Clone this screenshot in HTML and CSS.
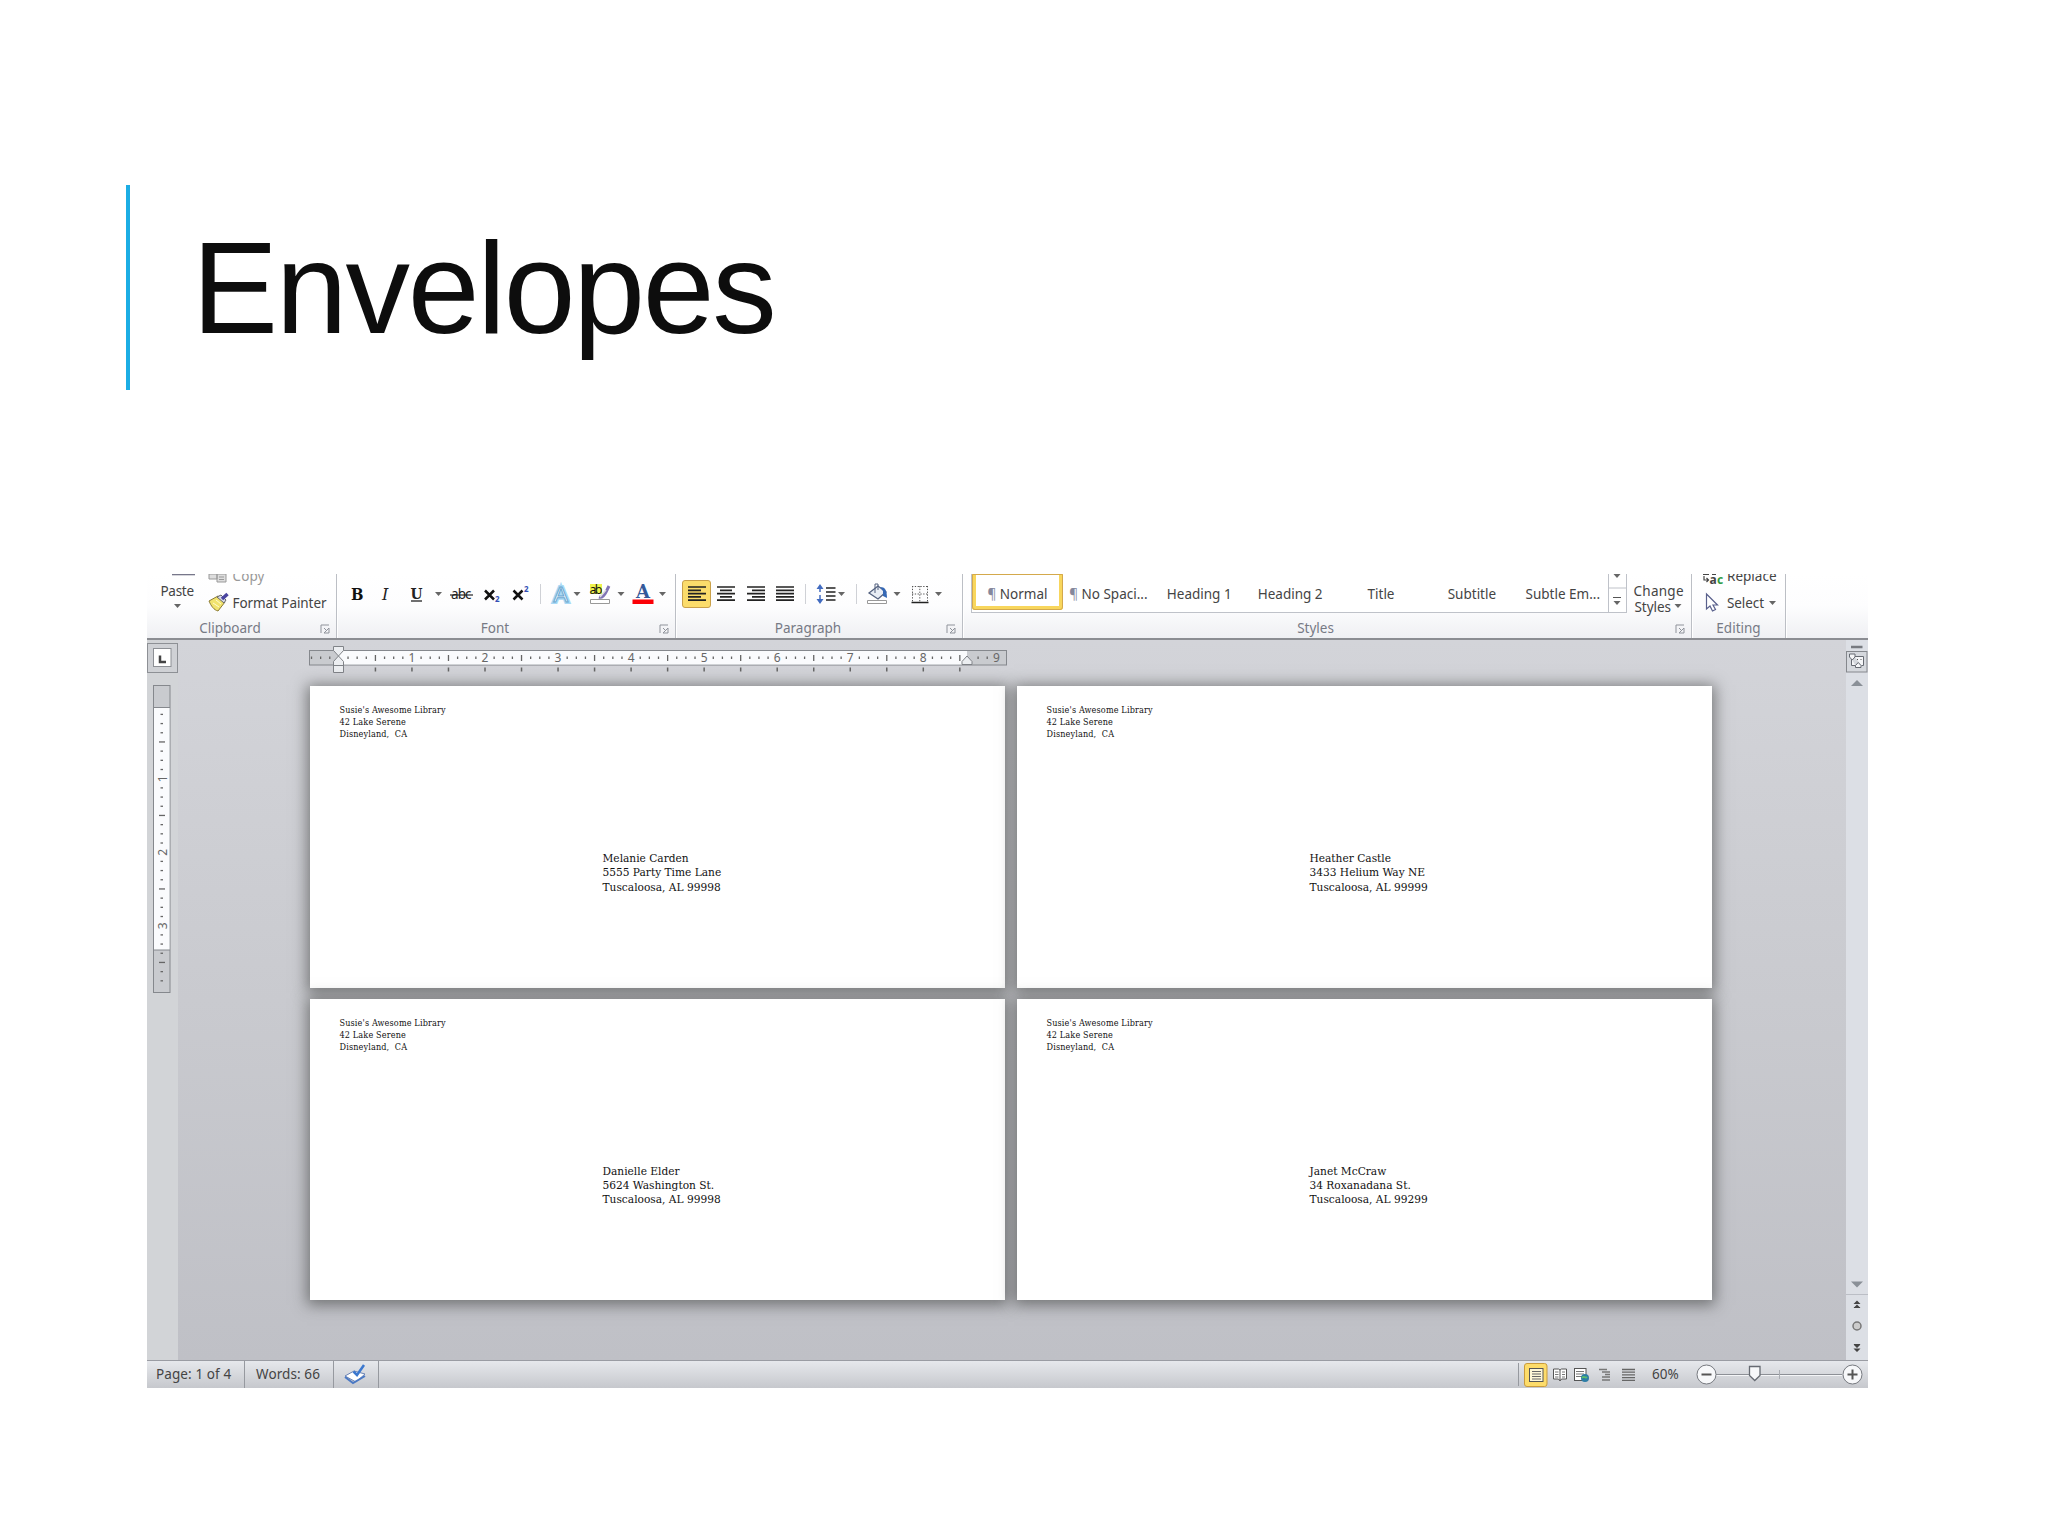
FILE: index.html
```html
<!DOCTYPE html>
<html lang="en">
<head>
  <meta charset="UTF-8" />
  <title>Envelopes</title>
  <link rel="stylesheet" href="styles.css">
</head>
<body>
  <header class="slide-title">
    <h1>Envelopes</h1>
  </header>

  <main class="word">
    <div class="ribbon">
      <section class="group clipboard">
        <div class="tools">
          <svg width="189" height="46" viewBox="147 574 189 46">
            <path d="M172 574.5h23" stroke="#77778a" stroke-width="1.6"/>
            <text x="160.500" y="595.500" textLength="33.500">Paste</text>
            <path class="arrow" d="M174 604h7l-3.500 4z"/>
            <path d="M209 574h8v5h-8zM217 574h9v8h-9z" fill="#ddd" stroke="#999"/>
            <path d="M219 577h5M219 579.500h5" stroke="#999"/>
            <text x="232.500" y="580.500" textLength="32" fill="#999">Copy</text>
            <path d="M209 601l9-5 7 6-7 9c-4-1-7-5-9-10z" fill="#f1e36e" stroke="#8b7b35"/>
            <path d="M213 603l6 4M216 600l5 4" stroke="#fffbd0"/>
            <path d="M217 597l4-2 5 5-2 3z" fill="#d9dbe8" stroke="#666"/>
            <path d="M222 599l5.500-5" stroke="#4a45a0" stroke-width="3.500"/>
            <text x="232.500" y="608" textLength="94">Format Painter</text>
          </svg>
        </div>
        <div class="caption" style="padding-right:23px">Clipboard</div>
        <svg class="launcher" viewBox="0 0 10 10"><path d="M1 9V1h8" /><path d="M4 4l3 3M9 4v5H4z" /></svg>
      </section>

      <section class="group font">
        <div class="tools">
          <svg width="32" height="46" viewBox="336 574 32 46"><text class="serif" x="351" y="599.500" font-size="16" font-weight="bold" textLength="12.500" lengthAdjust="spacingAndGlyphs" fill="#111">B</text></svg>
          <svg width="34" height="46" viewBox="368 574 34 46"><text class="serif" x="382" y="599.500" font-size="16" font-style="italic" fill="#222">I</text></svg>
          <svg width="46" height="46" viewBox="402 574 46 46">
            <text class="serif" x="410.500" y="598.500" font-size="15" font-weight="bold" textLength="12" lengthAdjust="spacingAndGlyphs" fill="#222">U</text>
            <path d="M411 601h11" stroke="#222" stroke-width="1.300"/>
            <path class="arrow" d="M435 592h7l-3.500 4z"/>
          </svg>
          <svg width="30" height="46" viewBox="448 574 30 46"><text x="451" y="599" font-size="13.500" textLength="20.500" fill="#222">abc</text><path d="M450 595h23" stroke="#222" stroke-width="1.200"/></svg>
          <svg width="28" height="46" viewBox="478 574 28 46"><path d="M485 590.500l9 9M494 590.500l-9 9" stroke="#111" stroke-width="2.500"/><text x="495" y="602" font-size="8" font-weight="bold" fill="#3350b5">2</text></svg>
          <svg width="28" height="46" viewBox="506 574 28 46"><path d="M513.500 590.500l9 9M522.500 590.500l-9 9" stroke="#111" stroke-width="2.500"/><text x="524" y="592" font-size="8" font-weight="bold" fill="#3350b5">2</text></svg>
          <svg width="14" height="46" viewBox="534 574 14 46"><path class="rule" d="M540.500 584v20"/></svg>
          <svg width="38" height="46" viewBox="548 574 38 46">
            <text class="glow" x="553.500" y="602" font-size="22" stroke="#a9d9f5" stroke-width="4" fill="#a9d9f5">A</text>
            <text class="glow" x="553.500" y="602" font-size="22" stroke="#6aa6cf" stroke-width="1" fill="#f5fbff">A</text>
            <path class="arrow" d="M573.500 592h7l-3.500 4z"/>
          </svg>
          <svg width="42" height="46" viewBox="586 574 42 46">
            <path d="M590 584h12v10h-12z" fill="#eef34c"/>
            <text x="589.500" y="594" font-size="12.500" textLength="13" fill="#111">ab</text>
            <path d="M599 597c3 1 5-1 7-5l3-6" fill="none" stroke="#8074b5" stroke-width="3"/>
            <path d="M600 597l6-7" stroke="#ddd" stroke-width="1.500"/>
            <path d="M590.500 599.500h19v4h-19z" fill="#fff" stroke="#999"/>
            <path class="arrow" d="M617.500 592h7l-3.500 4z"/>
          </svg>
          <svg width="42" height="46" viewBox="628 574 42 46">
            <text class="serif" x="636" y="598" font-size="19" font-weight="bold" textLength="14" lengthAdjust="spacingAndGlyphs" fill="#34599a">A</text>
            <path d="M632.500 599.500h21v4.500h-21z" fill="#fb0007"/>
            <path class="arrow" d="M659 592h7l-3.500 4z"/>
          </svg>
        </div>
        <div class="caption" style="padding-right:22px">Font</div>
        <svg class="launcher" viewBox="0 0 10 10"><path d="M1 9V1h8" /><path d="M4 4l3 3M9 4v5H4z" /></svg>
      </section>

      <section class="group paragraph">
        <div class="tools">
          <svg width="39" height="46" viewBox="675 574 39 46">
            <rect x="682.500" y="580.500" width="28" height="27" rx="2.500" fill="#fbdc6b" stroke="#c9a04a"/>
            <path class="lines" d="M688 587h18M688 590.300h13M688 593.600h18M688 596.900h13M688 600.200h18"/>
          </svg>
          <svg width="28" height="46" viewBox="714 574 28 46"><path class="lines" d="M717 587h18M720 590.300h12M717 593.600h18M720 596.900h12M717 600.200h18"/></svg>
          <svg width="29" height="46" viewBox="742 574 29 46"><path class="lines" d="M747 587h18M752 590.300h13M747 593.600h18M752 596.900h13M747 600.200h18"/></svg>
          <svg width="29" height="46" viewBox="771 574 29 46"><path class="lines" d="M776 587h18M776 590.300h18M776 593.600h18M776 596.900h18M776 600.200h18"/></svg>
          <svg width="12" height="46" viewBox="800 574 12 46"><path class="rule" d="M805.500 584v20"/></svg>
          <svg width="38" height="46" viewBox="812 574 38 46">
            <path d="M820 587v14" stroke="#416bc0" stroke-width="1.500" stroke-dasharray="5 3"/>
            <path d="M816.500 589l3.500-5 3.500 5zM816.500 599l3.500 5 3.500-5z" fill="#416bc0"/>
            <path class="lines" d="M826 588h9.500M826 592h9.500M826 596h9.500M826 600h9.500"/>
            <path class="arrow" d="M838 592h7l-3.500 4z"/>
          </svg>
          <svg width="12" height="46" viewBox="850 574 12 46"><path class="rule" d="M856.500 584v20"/></svg>
          <svg width="44" height="46" viewBox="862 574 44 46">
            <path d="M869 593l9-7 8 6-8 7z" fill="#e8edf5" stroke="#53617f" stroke-width="1.300"/>
            <path d="M875 593v-9h3v6" fill="none" stroke="#53617f"/>
            <path d="M880 587c5 0 7 3 7 11l-4-2v-5z" fill="#3568b5"/>
            <path d="M867.500 600.500h19v3h-19z" fill="#fff" stroke="#999"/>
            <path class="arrow" d="M893.500 592h7l-3.500 4z"/>
          </svg>
          <svg width="42" height="46" viewBox="906 574 42 46">
            <path d="M912 586.500h16M912 594h16M912.500 586v16M919.800 586v16M927.500 586v16" stroke="#555" stroke-dasharray="1.300 1.500" fill="none"/>
            <path d="M911.500 602.500h17" stroke="#222" stroke-width="1.500"/>
            <path class="arrow" d="M935 592h7l-3.500 4z"/>
          </svg>
        </div>
        <div class="caption" style="padding-right:22px">Paragraph</div>
        <svg class="launcher" viewBox="0 0 10 10"><path d="M1 9V1h8" /><path d="M4 4l3 3M9 4v5H4z" /></svg>
      </section>

      <section class="group styles">
        <div class="tools">
          <div class="gallery">
            <div class="style selected"><i>¶</i> Normal</div>
            <div class="style"><i>¶</i> No Spaci...</div>
            <div class="style">Heading 1</div>
            <div class="style">Heading 2</div>
            <div class="style">Title</div>
            <div class="style">Subtitle</div>
            <div class="style">Subtle Em...</div>
            <svg class="more" width="18" height="38" viewBox="0 0 18 38">
              <path d="M.5 0v38M0 14h18" stroke="#bfc2c9"/>
              <path class="arrow" d="M5.500 0h7l-3.500 4zM5.500 27h7l-3.500 4z"/>
              <path d="M5 23.500h8" stroke="#555"/>
            </svg>
          </div>
          <svg width="64" height="46" viewBox="1627 574 64 46">
            <text x="1633.500" y="595.500" textLength="50">Change</text>
            <text x="1634.500" y="612" textLength="36.500">Styles</text>
            <path class="arrow" d="M1674.500 604h7l-3.500 4z"/>
          </svg>
        </div>
        <div class="caption" style="padding-right:23px">Styles</div>
        <svg class="launcher" viewBox="0 0 10 10"><path d="M1 9V1h8" /><path d="M4 4l3 3M9 4v5H4z" /></svg>
      </section>

      <section class="group editing">
        <div class="tools">
          <svg width="93" height="46" viewBox="1692 574 93 46">
            <text x="1709.500" y="584" font-size="12" font-weight="bold">a</text>
            <text x="1717" y="584" font-size="12" font-weight="bold" fill="#2f9a43">c</text>
            <path d="M1704 576v4h4M1706.500 578l2 2-2 2" fill="none" stroke="#444" stroke-width="1.200"/>
            <path d="M1703 574.500h6M1712 574.500h4" stroke="#444"/>
            <text x="1727" y="580.500" textLength="49.500">Replace</text>
            <path d="M1706.500 594v15l3.500-3 2.500 5 3-1.500-2.500-4.500h4.500z" fill="#fff" stroke="#59608c" stroke-width="1.200"/>
            <text x="1727" y="608" textLength="37">Select</text>
            <path class="arrow" d="M1769 601h7l-3.500 4z"/>
          </svg>
        </div>
        <div class="caption">Editing</div>
      </section>
    </div>

    <div class="workspace">
      <div class="left-rail">
        <svg id="vruler" width="31" height="360" viewBox="147 640 31 360">
          <rect x="147.500" y="643.500" width="30" height="29" fill="#cfd1d5" stroke="#8d9095"/>
          <rect x="153.500" y="648.500" width="17.500" height="18" fill="#fff" stroke="#8d9095"/>
          <path d="M160 655.500v6.500h6" fill="none" stroke="#444" stroke-width="2.500"/>
          <rect x="153.500" y="685.500" width="16.500" height="307" fill="#c9cbcf" stroke="#85888d"/>
          <rect x="154" y="708" width="15.500" height="242" fill="#fafbfd"/>
          <path d="M154 707.500h16M154 950h16" stroke="#85888d"/>
        </svg>
      </div>

      <div class="desk">
        <svg id="hruler" width="740" height="46" viewBox="300 640 740 46">
          <rect x="309.500" y="650.500" width="697" height="14.500" fill="#c9cbcf" stroke="#85888d"/>
          <rect x="339" y="651" width="628" height="13.500" fill="#fafbfd"/>
        </svg>
        <div class="pages">
          <article class="envelope">
            <p class="sender">Susie's Awesome Library<br>42 Lake Serene<br>Disneyland,&nbsp; CA</p>
            <p class="recipient">Melanie Carden<br>5555 Party Time Lane<br>Tuscaloosa, AL 99998</p>
          </article>
          <article class="envelope">
            <p class="sender">Susie's Awesome Library<br>42 Lake Serene<br>Disneyland,&nbsp; CA</p>
            <p class="recipient">Heather Castle<br>3433 Helium Way NE<br>Tuscaloosa, AL 99999</p>
          </article>
          <article class="envelope">
            <p class="sender">Susie's Awesome Library<br>42 Lake Serene<br>Disneyland,&nbsp; CA</p>
            <p class="recipient">Danielle Elder<br>5624 Washington St.<br>Tuscaloosa, AL 99998</p>
          </article>
          <article class="envelope">
            <p class="sender">Susie's Awesome Library<br>42 Lake Serene<br>Disneyland,&nbsp; CA</p>
            <p class="recipient">Janet McCraw<br>34 Roxanadana St.<br>Tuscaloosa, AL 99299</p>
          </article>
        </div>
      </div>

      <div class="scrollbar">
        <svg width="22" height="50" viewBox="1846 640 22 50">
          <path d="M1851 647h11.500" stroke="#777a80" stroke-width="2.500"/>
          <rect x="1846.500" y="651.500" width="20.500" height="20.500" fill="#d5d8dd" stroke="#85888d"/>
          <path d="M1851.500 659v6.500h4M1854.500 656.500h9v9h-2" fill="#f5f6f8" stroke="#666a72"/>
          <path d="M1849.500 654h5.500v3l-2.750 3-2.750-3zM1855.500 667.500v-2l2.750-3 2.750 3v2z" fill="#f5f6f8" stroke="#666a72"/>
          <path d="M1857 659.500h1M1860.500 659.500h1" stroke="#555"/>
          <path d="M1851 686l6-6 6 6z" fill="#8a9097"/>
        </svg>
        <svg width="22" height="81" viewBox="1846 1280 22 81">
          <path d="M1851 1282.500l6 6 6-6z" fill="#8a9097"/>
          <path d="M1846 1295.500h22" stroke="#bbbec5"/>
          <path d="M1853.500 1305l3.500-3.500 3.500 3.500zM1853.500 1309l3.500-3.500 3.500 3.500zM1853.500 1345.500h7l-3.500 3.500zM1853.500 1349.500h7l-3.500 3.500z" fill="#444"/>
          <path d="M1854 1308.500h6M1854 1345.500h6" stroke="#444"/>
          <circle cx="1857" cy="1327" r="4" fill="#ccc" stroke="#777" stroke-width="1.500"/>
        </svg>
      </div>
    </div>

    <footer class="status">
      <span class="cell page-count">Page: 1 of 4</span>
      <span class="cell words">Words: 66</span>
      <span class="cell proof">
        <svg width="24" height="22" viewBox="343 1363 24 22">
          <path d="M345 1376l9-5 11 3-9 8z" fill="#fff" stroke="#6a83b5"/>
          <path d="M345 1377l8 6 12-7" fill="none" stroke="#4b79c4" stroke-width="2"/>
          <path d="M353.500 1371.500l3.500 3.500 7-10" fill="none" stroke="#3b78cf" stroke-width="2.500"/>
        </svg>
      </span>
      <span class="views">
        <svg width="130" height="27" viewBox="1518 1361 130 27">
          <path d="M1518.500 1363v23" stroke="#96999f"/>
          <rect x="1524.500" y="1363.500" width="22.500" height="23" rx="2.500" fill="#fddc6a" stroke="#c99b3c"/>
          <rect x="1529.500" y="1368.500" width="13.500" height="13" fill="#fff8d8" stroke="#555"/>
          <path d="M1532 1371.500h9M1532 1374h9M1532 1376.500h9M1532 1379h9" stroke="#666"/>
          <path d="M1553.500 1369h5l1.500 1 1.500-1h5v10h-5l-1.500 2-1.500-2h-5zM1560 1370v10" fill="#fff" stroke="#555"/>
          <path d="M1555 1372h3.500M1555 1374.500h3.500M1555 1377h3.500M1562 1372h3M1562 1374.500h3M1562 1377h3" stroke="#777"/>
          <rect x="1574.500" y="1368.500" width="11.500" height="12" fill="#fff" stroke="#555"/>
          <path d="M1576 1371.500h8M1576 1374h8M1576 1376.500h6" stroke="#777"/>
          <circle cx="1585" cy="1378" r="4" fill="#2d7da6"/>
          <path d="M1582 1378c2-3 3 1 5-1" stroke="#5dc06a" stroke-width="1.800" fill="none"/>
          <path d="M1599 1369.500h8M1602 1372h8M1605 1374.500h5M1602 1377h8M1602 1380h8" stroke="#777" stroke-width="1.300"/>
          <path d="M1622 1369.500h13M1622 1372.200h13M1622 1374.900h13M1622 1377.600h13M1622 1380.300h13" stroke="#666" stroke-width="1.300"/>
        </svg>
      </span>
      <span class="zoom">60%</span>
      <svg class="slider" width="172" height="27" viewBox="1696 1361 172 27">
        <path d="M1716 1374.500h126" stroke="#8d9096"/>
        <path d="M1716 1375.500h126" stroke="#f4f5f7"/>
        <path d="M1779.500 1370v9" stroke="#a9acb2"/>
        <circle cx="1706.500" cy="1374.500" r="9.500" fill="#f7f8fa" stroke="#777a80"/>
        <path d="M1701.500 1374.500h10" stroke="#555" stroke-width="2"/>
        <circle cx="1852.500" cy="1374.500" r="9.500" fill="#f7f8fa" stroke="#777a80"/>
        <path d="M1847.500 1374.500h10M1852.500 1369.500v10" stroke="#555" stroke-width="2"/>
        <path d="M1749.500 1366.500h10.500v9l-5.250 5-5.250-5z" fill="#f7f8fa" stroke="#666a72" stroke-width="1.300"/>
      </svg>
    </footer>
  </main>

  <script src="ruler.js"></script>
</body>
</html>
```
FILE: styles.css
```css
body {
  margin: 0;
  background: #fff;
  font-family: "Noto Sans", "Open Sans", sans-serif;
  font-size: 13.5px;
  color: #444;
}
.slide-title {
  box-sizing: border-box;
  height: 205px;
  margin: 185px 0 184px 126px;
  padding-left: 62px;
  border-left: 4px solid #1cade4;
}
h1 {
  margin: 0;
  padding-top: 29px;
  font-family: "Liberation Sans", Arial, sans-serif;
  font-size: 129px;
  font-weight: normal;
  line-height: 148px;
  letter-spacing: -2.2px;
  color: #0d0d0d;
}
.word {
  display: flex;
  flex-direction: column;
  width: 1721px;
  height: 814px;
  margin-left: 147px;
  overflow: hidden;
}
svg {
  display: block;
  flex: none;
}
.tools svg {
  fill: #444;
}
.serif {
  font-family: "DejaVu Serif", serif;
}
.glow {
  font-family: "Liberation Sans", Arial, sans-serif;
}
.arrow {
  fill: #666;
}
.rule {
  stroke: #cfd1d6;
}
.lines {
  stroke: #222;
  stroke-width: 1.7;
}

/* ribbon */
.ribbon {
  display: flex;
  height: 64px;
  flex: none;
  border-bottom: 2px solid #8b8d92;
  background: linear-gradient(#fff 0%, #fdfdfe 50%, #eff0f3 100%);
}
.group {
  position: relative;
  box-sizing: border-box;
  border-right: 1px solid #bcbfc5;
  box-shadow: 1px 0 #fff;
}
.clipboard { width: 190px; }
.clipboard .tools { width: 189px; }
.font { width: 339px; }
.font .tools, .paragraph .tools { margin-left: -1px; }
.paragraph { width: 287px; }
.styles { width: 729px; }
.editing { width: 94px; }
.tools {
  display: flex;
  height: 46px;
}
.caption {
  height: 18px;
  line-height: 17px;
  text-align: center;
  color: #777a85;
}
.launcher {
  position: absolute;
  right: 6px;
  bottom: 4px;
  width: 10px;
  height: 10px;
  fill: none;
  stroke: #8f939b;
}
.gallery {
  display: flex;
  box-sizing: border-box;
  width: 656px;
  height: 39px;
  margin-left: 8px;
  border: solid #bfc2c9;
  border-width: 0 1px 1px;
  background: #fff;
}
.style {
  box-sizing: border-box;
  flex: none;
  width: 90.9px;
  line-height: 40px;
  text-align: center;
  white-space: nowrap;
}
.style i {
  font-style: normal;
  color: #85889c;
}
.style.selected {
  height: 36px;
  border: 4px solid #f8d65c;
  border-top: 0;
  border-radius: 0 0 3px 3px;
  outline: 1px solid #d4a94c;
  outline-offset: -1px;
}

/* document area */
.workspace {
  display: flex;
  height: 720px;
  flex: none;
  background: linear-gradient(#d3d4d9, #c9cacf 50%, #bfc0c6);
}
.left-rail {
  width: 31px;
  background: #d2d4d7;
}
.desk {
  flex: 1;
}
#hruler {
  margin-left: 122px;
}
.pages {
  display: grid;
  grid-template-columns: 695px 695px;
  grid-template-rows: 301.5px 301.5px;
  gap: 11px 12px;
  margin-left: 132px;
}
.envelope {
  background: #fff;
  box-shadow: 0 2px 14px 3px rgba(60, 62, 60, .6);
  font-family: "DejaVu Serif Condensed", "DejaVu Serif", serif;
  color: #111;
}
.envelope p {
  margin: 0;
}
.sender {
  padding: 18px 0 0 29.5px;
  font-size: 9px;
  line-height: 12px;
  letter-spacing: .15px;
}
.recipient {
  padding: 111px 0 0 292.5px;
  font-size: 11.8px;
  line-height: 14.4px;
}
.scrollbar {
  display: flex;
  flex-direction: column;
  justify-content: space-between;
  width: 22px;
  background: #dcdfe5;
}
#hruler text, #vruler text {
  font-size: 12px;
  text-anchor: middle;
  fill: #666;
}

/* status bar */
.status {
  display: flex;
  box-sizing: border-box;
  height: 28px;
  border-top: 1px solid #9a9ca3;
  background: linear-gradient(#e6e8ec, #c6c8cd);
  line-height: 26px;
}
.cell {
  box-sizing: border-box;
  border-right: 1px solid #96999f;
  white-space: nowrap;
}
.page-count {
  width: 98px;
  padding-left: 9px;
  letter-spacing: .1px;
}
.words {
  width: 89px;
  padding-left: 11px;
  letter-spacing: .1px;
}
.proof {
  width: 45px;
  padding: 2px 0 0 9px;
}
.views {
  margin-left: auto;
}
.zoom {
  width: 44px;
  padding-left: 4px;
}
```
FILE: ruler.js
```js
// one inch on the ruler at 60% zoom
const INCH = 73.05;
const NS = "http://www.w3.org/2000/svg";

function add(svg, tag, attrs, text) {
  const el = document.createElementNS(NS, tag);
  for (const k in attrs) el.setAttribute(k, attrs[k]);
  if (text) el.textContent = text;
  svg.appendChild(el);
}

const h = document.getElementById("hruler");
for (let i = -3; i <= 72; i++) {
  const x = 338.9 + i * INCH / 8;
  if (i % 4 === 0 && i > 0 && i < 70) {
    add(h, "path", { d: `M${x} 667.500v4`, stroke: "#666", "stroke-width": 1.5 });
  }
  if (i === 0 || i === 69) continue;
  if (i % 8 === 0) add(h, "text", { x: x, y: 662 }, String(i / 8));
  else if (i % 4 === 0) add(h, "path", { d: `M${x} 655v6`, stroke: "#666", "stroke-width": 1.3 });
  else add(h, "path", { d: `M${x} 656.500v2.500`, stroke: "#666", "stroke-width": 1.3 });
}
// indent markers
add(h, "path", { d: "M333.500 646.500h10v4l-5 5.500-5-5.500zM333.500 672.500v-11l5-5.500 5 5.500v11zM333.500 665.500h10", fill: "#eceef1", stroke: "#808388" });
add(h, "path", { d: "M962 664.500v-3l5-5.500 5 5.500v3z", fill: "#eceef1", stroke: "#808388" });

const v = document.getElementById("vruler");
for (let i = 1; i <= 30; i++) {
  const y = 705.2 + i * 73.5 / 8;
  if (i % 8 === 0) add(v, "text", { x: 0, y: 0, transform: `translate(166.500 ${y}) rotate(-90)` }, String(i / 8));
  else if (i % 4 === 0) add(v, "path", { d: `M159 ${y}h6`, stroke: "#666", "stroke-width": 1.3 });
  else add(v, "path", { d: `M160.500 ${y}h2.500`, stroke: "#666", "stroke-width": 1.3 });
}
```
